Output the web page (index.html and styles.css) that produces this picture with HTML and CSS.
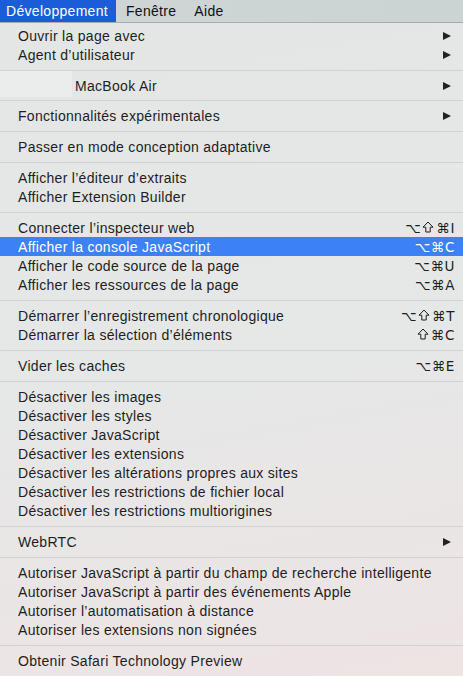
FILE: index.html
```html
<!DOCTYPE html>
<html lang="fr">
<head>
<meta charset="utf-8">
<title>Développement</title>
<link rel="stylesheet" href="styles.css">
</head>
<body>
<div class="menubar">
  <span class="title active">Développement</span>
  <span class="title">Fenêtre</span>
  <span class="title">Aide</span>
</div>
<div class="menu">
  <div class="item sub"><span class="label">Ouvrir la page avec</span><span class="arrow"></span></div>
  <div class="item sub"><span class="label">Agent d’utilisateur</span><span class="arrow"></span></div>
  <div class="gap-top"></div>
  <div class="device"><span class="device-box"></span><span class="device-name">MacBook Air</span><span class="arrow"></span></div>
  <div class="gap-bottom"></div>
  <div class="item sub"><span class="label">Fonctionnalités expérimentales</span><span class="arrow"></span></div>
  <div class="sep"></div>
  <div class="item"><span class="label">Passer en mode conception adaptative</span></div>
  <div class="sep"></div>
  <div class="item"><span class="label">Afficher l’éditeur d’extraits</span></div>
  <div class="item"><span class="label">Afficher Extension Builder</span></div>
  <div class="sep"></div>
  <div class="item"><span class="label">Connecter l’inspecteur web</span><span class="key">⌥<svg class="shift" viewBox="0 0 12 12"><path d="M6 1 L11 6.2 H8.2 V11 H3.8 V6.2 H1 Z"/></svg>⌘I</span></div>
  <div class="item selected"><span class="label">Afficher la console JavaScript</span><span class="key">⌥⌘C</span></div>
  <div class="item"><span class="label">Afficher le code source de la page</span><span class="key">⌥⌘U</span></div>
  <div class="item"><span class="label">Afficher les ressources de la page</span><span class="key">⌥⌘A</span></div>
  <div class="sep"></div>
  <div class="item"><span class="label">Démarrer l’enregistrement chronologique</span><span class="key">⌥<svg class="shift" viewBox="0 0 12 12"><path d="M6 1 L11 6.2 H8.2 V11 H3.8 V6.2 H1 Z"/></svg>⌘T</span></div>
  <div class="item"><span class="label">Démarrer la sélection d’éléments</span><span class="key"><svg class="shift" viewBox="0 0 12 12"><path d="M6 1 L11 6.2 H8.2 V11 H3.8 V6.2 H1 Z"/></svg>⌘C</span></div>
  <div class="sep"></div>
  <div class="item"><span class="label">Vider les caches</span><span class="key">⌥⌘E</span></div>
  <div class="sep"></div>
  <div class="item"><span class="label">Désactiver les images</span></div>
  <div class="item"><span class="label">Désactiver les styles</span></div>
  <div class="item"><span class="label">Désactiver JavaScript</span></div>
  <div class="item"><span class="label">Désactiver les extensions</span></div>
  <div class="item"><span class="label">Désactiver les altérations propres aux sites</span></div>
  <div class="item"><span class="label">Désactiver les restrictions de fichier local</span></div>
  <div class="item"><span class="label">Désactiver les restrictions multiorigines</span></div>
  <div class="sep"></div>
  <div class="item sub"><span class="label">WebRTC</span><span class="arrow"></span></div>
  <div class="sep"></div>
  <div class="item"><span class="label">Autoriser JavaScript à partir du champ de recherche intelligente</span></div>
  <div class="item"><span class="label">Autoriser JavaScript à partir des événements Apple</span></div>
  <div class="item"><span class="label">Autoriser l’automatisation à distance</span></div>
  <div class="item"><span class="label">Autoriser les extensions non signées</span></div>
  <div class="sep"></div>
  <div class="item"><span class="label">Obtenir Safari Technology Preview</span></div>
</div>
</body>
</html>
```

FILE: styles.css
```css
html, body {
  margin: 0;
  padding: 0;
}
body {
  width: 463px;
  height: 676px;
  overflow: hidden;
  font-family: "Liberation Sans", Arial, sans-serif;
  font-size: 14px;
  letter-spacing: 0.3px;
  color: #1e1e1e;
  background: linear-gradient(170deg, #e4e6e6 0%, #e6e7e7 55%, #ebe5e5 85%, #ede4e4 100%);
}
.menubar {
  height: 22px;
  display: flex;
  align-items: stretch;
  background: linear-gradient(90deg, #cfd6d5, #ccd4d3);
  border-bottom: 1px solid #a9acac;
}
.title {
  display: flex;
  align-items: center;
  padding: 0 9px;
  color: #111;
}
.title.active {
  background: #1b5cd9;
  color: #fff;
  padding: 0 0 0 6px;
  width: 110px;
  margin-right: 1px;
}
.menu {
  padding-top: 3px;
}
.item {
  height: 19px;
  display: flex;
  align-items: center;
  padding: 0 10px 0 18px;
}
.item .label {
  flex: 1;
  white-space: nowrap;
}
.item.selected {
  background: #3c82f6;
  color: #fff;
}
.key {
  display: flex;
  align-items: center;
  font-family: "DejaVu Sans", "Liberation Sans", sans-serif;
  font-size: 13.5px;
  letter-spacing: 0.6px;
  margin-right: -2px;
}
.shift {
  width: 12px;
  height: 12px;
  margin: 0 2px 1px 1px;
  fill: none;
  stroke: currentColor;
  stroke-width: 1;
  stroke-linejoin: miter;
}
.arrow {
  width: 0;
  height: 0;
  border-top: 4.5px solid transparent;
  border-bottom: 4.5px solid transparent;
  border-left: 8px solid #222;
  margin-right: 2px;
}
.sep {
  height: 12px;
  display: flex;
  align-items: center;
}
.sep::before {
  content: "";
  display: block;
  width: 100%;
  height: 1px;
  background: #d1d2d2;
}
.gap-top {
  height: 6px;
}
.gap-bottom {
  height: 5px;
}
.device {
  height: 29px;
  border-top: 1px solid #d1d2d2;
  border-bottom: 1px solid #d1d2d2;
  display: flex;
  align-items: center;
  padding-right: 10px;
}
.device-box {
  align-self: flex-start;
  width: 72px;
  height: 26px;
  background: #ebecec;
}
.device-name {
  flex: 1;
  padding-left: 3px;
}
```
